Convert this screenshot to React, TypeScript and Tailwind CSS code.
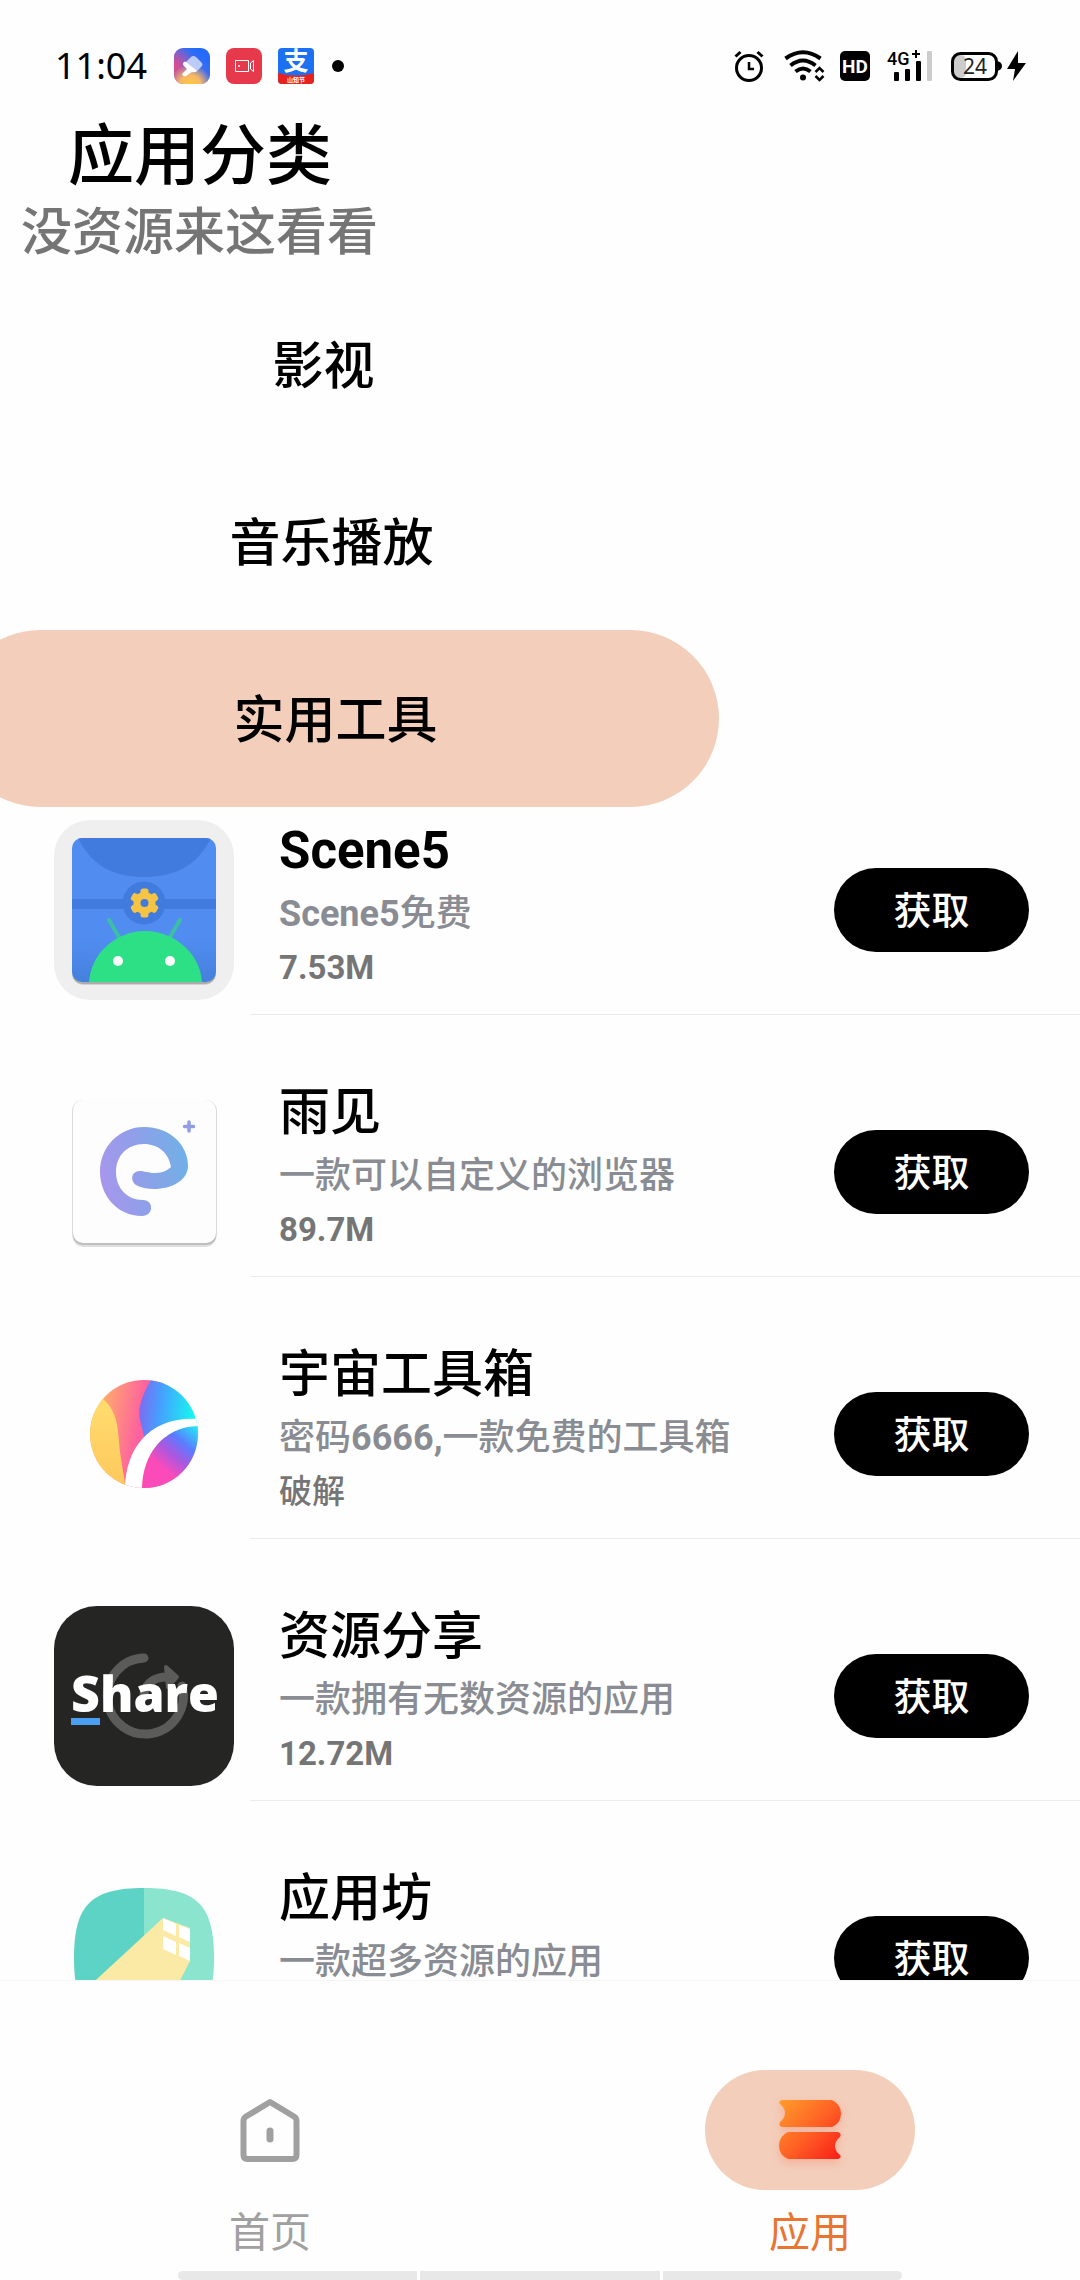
import { useState } from "react";
import type { ReactNode } from "react";

type AppItem = {
  name: string;
  desc: string;
  size: string;
  icon: ReactNode;
};

// Digits and latin words are set bold, chinese text stays medium
function Mixed({ text }: { text: string }) {
  return (
    <>
      {text.split(/([\x20-\x7e]+)/).map((part, i) =>
        i % 2 === 1 ? (
          <span key={i} className="font-bold">
            {part}
          </span>
        ) : (
          part
        ),
      )}
    </>
  );
}

function SceneIcon() {
  return (
    <svg viewBox="0 0 180 180" className="size-[180px]" aria-hidden="true">
      <defs>
        <clipPath id="scene-card">
          <rect x="18" y="18" width="144" height="144" rx="10" />
        </clipPath>
        <linearGradient id="scene-bg" x1="0" y1="0" x2="0" y2="1">
          <stop offset="0.7" stopColor="#518df1" />
          <stop offset="1" stopColor="#4580dd" />
        </linearGradient>
      </defs>
      <rect width="180" height="180" rx="36" fill="#efefef" />
      <rect x="19" y="21" width="142" height="144" rx="10" fill="#000" opacity="0.12" />
      <rect x="18" y="20" width="144" height="144" rx="10" fill="#000" opacity="0.18" />
      <g clipPath="url(#scene-card)">
        <rect x="18" y="18" width="144" height="144" fill="url(#scene-bg)" />
        <path d="M24 18C39 49 64 57 90 57s52-8 67-39z" fill="#417bdd" />
        <rect x="18" y="79" width="144" height="10" fill="#417bdd" />
        <circle cx="90" cy="83" r="21.500" fill="#417bdd" />
        <g fill="#f6c445">
          <circle cx="90.500" cy="83" r="11" />
          <rect x="86.500" y="68.500" width="8" height="29" rx="2.500" />
          <rect x="86.500" y="68.500" width="8" height="29" rx="2.500" transform="rotate(60 90.500 83)" />
          <rect x="86.500" y="68.500" width="8" height="29" rx="2.500" transform="rotate(120 90.500 83)" />
        </g>
        <circle cx="90.500" cy="83" r="4" fill="#417bdd" />
        <path d="M55 100l10 17M126 100l-10 17" stroke="#3ac0a2" strokeWidth="4" strokeLinecap="round" />
        <path d="M35 162c2-29 27-51 56-51s55 22 57 51z" fill="#2ee085" />
        <circle cx="64" cy="141" r="5" fill="#fff" />
        <circle cx="116" cy="141" r="5" fill="#fff" />
      </g>
    </svg>
  );
}

function RainIcon() {
  return (
    <svg viewBox="0 0 180 180" className="size-[180px]" aria-hidden="true">
      <defs>
        <linearGradient id="rain-e" gradientUnits="userSpaceOnUse" x1="46" y1="90" x2="134" y2="76">
          <stop offset="0" stopColor="#a797ec" />
          <stop offset="0.45" stopColor="#8f9fe9" />
          <stop offset="1" stopColor="#70b1e6" />
        </linearGradient>
      </defs>
      <rect x="19" y="21" width="143" height="144" rx="10" fill="#000" opacity="0.12" />
      <rect x="18" y="18" width="145" height="145" rx="11" fill="#000" opacity="0.14" />
      <rect x="19" y="18" width="143" height="143" rx="10" fill="#fdfdfe" />
      <path
        d="M90 45C115 45 134 62 134 84C134 98 118 107 100 107C94 107 88 106 84 104C76 101 76 89 86 89C90 89 94 91 102 91C108 91 114 88 117 85C115 71 104 62 90 62C73 62 62 74 62 90C62 106 73 118 89 118C100 118 100 134 88 134C63 134 46 113 46 90C46 64 66 45 90 45z"
        fill="url(#rain-e)"
      />
      <path d="M135 40v9M130.500 44.500h9" stroke="#919ce6" strokeWidth="3.500" strokeLinecap="round" />
    </svg>
  );
}

function UniverseIcon() {
  return (
    <svg viewBox="0 0 180 180" className="size-[180px]" aria-hidden="true">
      <defs>
        <clipPath id="uni-ball">
          <circle cx="90" cy="90" r="54" />
        </clipPath>
        <linearGradient id="uni-pink" x1="0.1" y1="0.2" x2="0.9" y2="0.4">
          <stop offset="0.1" stopColor="#ffa76e" />
          <stop offset="0.75" stopColor="#fd5fa0" />
        </linearGradient>
        <linearGradient id="uni-blue" x1="0" y1="0.5" x2="1" y2="0.6">
          <stop offset="0" stopColor="#7d6cf0" />
          <stop offset="0.3" stopColor="#489dff" />
          <stop offset="0.85" stopColor="#15f8ee" />
        </linearGradient>
        <linearGradient id="uni-low" x1="0.9" y1="0" x2="0.2" y2="0.9">
          <stop offset="0" stopColor="#25e4f6" />
          <stop offset="0.28" stopColor="#5a7cff" />
          <stop offset="0.5" stopColor="#a858e0" />
          <stop offset="0.75" stopColor="#fb4bb9" />
        </linearGradient>
        <linearGradient id="uni-yellow" x1="0" y1="0" x2="0" y2="1">
          <stop offset="0" stopColor="#ffe072" />
          <stop offset="1" stopColor="#ffc85c" />
        </linearGradient>
      </defs>
      <g clipPath="url(#uni-ball)">
        <rect x="36" y="36" width="75" height="108" fill="url(#uni-pink)" />
        <path d="M36 36L50 56C62 66 64 82 65 98S70 130 72 146H36z" fill="url(#uni-yellow)" />
        <path d="M98 34C90 48 83 62 86 76L91 96L150 84V34z" fill="url(#uni-blue)" />
        <path d="M88 146C88 112 108 82 146 82V146z" fill="url(#uni-low)" />
        <path d="M71 146C71 104 96 71 146 75V82C108 82 88 112 88 146z" fill="#fff" />
      </g>
    </svg>
  );
}

function ShareIcon() {
  return (
    <svg viewBox="0 0 180 180" className="size-[180px]" aria-hidden="true">
      <rect width="180" height="180" rx="43" fill="#252524" />
      <g fill="none" stroke="#5b5b5a" strokeWidth="9" strokeLinecap="round">
        <path d="M90 52A38 38 0 1 0 128 80" />
        <path d="M90 88C92 76 102 71 113 71" />
      </g>
      <path d="M112 61L123 71L114 81z" fill="#5b5b5a" stroke="#5b5b5a" strokeWidth="4" strokeLinejoin="round" />
      <text x="91" y="106" textAnchor="middle" className="fill-white font-['Open_Sans'] text-[50px] font-extrabold">
        Share
      </text>
      <rect x="17" y="112" width="29" height="7" fill="#4b9ff2" />
    </svg>
  );
}

function WorkshopIcon() {
  return (
    <svg viewBox="0 0 180 180" className="size-[180px]" aria-hidden="true">
      <defs>
        <clipPath id="shop-card">
          <path d="M90 20C143 20 160 37 160 90S143 160 90 160S20 143 20 90S37 20 90 20z" />
        </clipPath>
      </defs>
      <g clipPath="url(#shop-card)">
        <rect x="20" y="20" width="70" height="140" fill="#5dd3c6" />
        <rect x="90" y="20" width="70" height="140" fill="#8be4cd" />
        <path d="M109 50L136 60V93L102 160H-10z" fill="#fbeaa5" />
        <path d="M109 50l13 6v12l-13-6zM125 57l11 4v13l-11-5zM109 68l13 6v13l-13-6zM125 75l11 5v13l-11-5z" fill="#fff" />
      </g>
    </svg>
  );
}

function StatusBar() {
  return (
    <div className="flex h-[117px] shrink-0 items-center justify-between pt-[15px] pr-[54px] pl-[55px]">
      <div className="flex items-center">
        <span className="w-[119px] font-['Noto_Sans'] text-[36px] leading-none font-normal">11:04</span>
        <svg viewBox="0 0 36 36" className="size-9" aria-hidden="true">
          <defs>
            <linearGradient id="brush-bg" x1="0.100" y1="1" x2="0.800" y2="0.200">
              <stop offset="0" stopColor="#9a62b8" />
              <stop offset="0.35" stopColor="#5f6ee0" />
              <stop offset="1" stopColor="#246bfb" />
            </linearGradient>
            <radialGradient id="brush-warm" cx="0.45" cy="1.05" r="0.6">
              <stop offset="0" stopColor="#ffc93a" />
              <stop offset="0.5" stopColor="#f7b765" />
              <stop offset="1" stopColor="#f7b765" stopOpacity="0" />
            </radialGradient>
            <radialGradient id="brush-red" cx="0" cy="0.5" r="0.6">
              <stop offset="0" stopColor="#e8488a" />
              <stop offset="1" stopColor="#e8488a" stopOpacity="0" />
            </radialGradient>
          </defs>
          <rect width="36" height="36" rx="9" fill="url(#brush-bg)" />
          <rect width="36" height="36" rx="9" fill="url(#brush-red)" />
          <rect width="36" height="36" rx="9" fill="url(#brush-warm)" />
          <path d="M11 15l6-6q2-2 5 0l6 6q1 2 0 3l-6 6z" fill="#c9d6fa" opacity="0.9" />
          <path d="M10 14q1-1 2 0l11 9q-2 2-5 1l-6 4q-3 1-4-2l5-5-3-3q-2-2 0-4z" fill="#fff" />
        </svg>
        <svg viewBox="0 0 36 36" className="ml-4 size-9" aria-hidden="true">
          <rect width="36" height="36" rx="8" fill="#e63a4c" />
          <path d="M9.500 12.500h13v11h-13zM27.500 12.500l-3 2.500v6l3 2.500z" fill="none" stroke="#fff" />
          <circle cx="13" cy="18" r="1" fill="#fff" />
        </svg>
        <svg viewBox="0 0 36 36" className="ml-4 size-9 overflow-visible" aria-hidden="true">
          <rect width="36" height="36" rx="4" fill="#1c70f2" />
          <path d="M0 25q18 5 36 0v7q0 4-4 4H4q-4 0-4-4z" fill="#e8231f" />
          <text x="18" y="22" textAnchor="middle" className="fill-white font-['Noto_Sans_CJK_SC'] text-[25px] font-bold">
            支
          </text>
          <text x="18" y="34" textAnchor="middle" className="fill-white font-['Noto_Sans_CJK_SC'] text-[6px] font-bold">
            山知节
          </text>
        </svg>
        <span className="ml-[18px] size-3 rounded-full bg-black" />
      </div>

      <div className="flex items-center">
        <svg viewBox="0 0 30 32" className="h-8 w-[30px]" fill="none" stroke="#000" aria-hidden="true">
          <circle cx="15" cy="18" r="12.500" strokeWidth="3" />
          <path d="M15 12v7h5" strokeWidth="2.500" />
          <path d="M1.500 6.500l5-4.500M28.500 6.500l-5-4.500" strokeWidth="3" />
        </svg>
        <svg viewBox="0 0 42 32" className="ml-5 h-8 w-[42px]" fill="none" stroke="#000" aria-hidden="true">
          <path d="M1.500 8.500Q19 -4 36.500 8.500" strokeWidth="4" />
          <path d="M6.500 15.500Q19 5.500 31.500 15.500" strokeWidth="4" />
          <path d="M11.500 21.500Q19 15.500 26.500 21.500" strokeWidth="4" />
          <circle cx="19" cy="27.500" r="3" fill="#000" stroke="none" />
          <path d="M31.500 22l4-4l4 4M31.500 26l4 4l4-4" strokeWidth="2.500" />
        </svg>
        <svg viewBox="0 0 30 30" className="ml-[14px] size-[30px]" aria-hidden="true">
          <rect width="30" height="30" rx="5" fill="#000" />
          <text x="15" y="22" textAnchor="middle" className="fill-white font-[Roboto] text-[19px] font-bold">
            HD
          </text>
        </svg>
        <svg viewBox="0 0 46 32" className="ml-[18px] h-8 w-[46px] overflow-visible" aria-hidden="true">
          <text x="-1" y="15" className="font-[Roboto] text-[18px] font-medium">
            4G
          </text>
          <path d="M24 4h8M28 0v8" stroke="#000" strokeWidth="2" />
          <rect x="6" y="22" width="5" height="9" rx="1" />
          <rect x="17" y="19" width="5" height="12" rx="1" />
          <rect x="28" y="11" width="5" height="20" rx="1" />
          <rect x="39" y="1" width="5" height="30" rx="1" fill="#ccc" />
        </svg>
        <svg viewBox="0 0 76 32" className="ml-4 h-8 w-[76px]" aria-hidden="true">
          <rect x="4" y="5" width="12" height="23" rx="5" fill="#ccc" />
          <rect x="2.500" y="3.500" width="44" height="26" rx="8" fill="none" stroke="#000" strokeWidth="3" />
          <path d="M47 11q5 1 5 5t-5 5z" />
          <text x="25" y="24" textAnchor="middle" className="fill-[#222] font-['Noto_Sans'] text-[21px] font-normal">
            24
          </text>
          <path d="M68 1L57 19h8l-2 12L76 13h-8z" />
        </svg>
      </div>
    </div>
  );
}

const TABS = [
  { label: "影视", shift: "-ml-15" },
  { label: "音乐播放", shift: "-ml-13" },
  { label: "实用工具", shift: "-ml-12" },
];

const APPS: AppItem[] = [
  { name: "Scene5", desc: "Scene5免费", size: "7.53M", icon: <SceneIcon /> },
  { name: "雨见", desc: "一款可以自定义的浏览器", size: "89.7M", icon: <RainIcon /> },
  { name: "宇宙工具箱", desc: "密码6666,一款免费的工具箱", size: "破解", icon: <UniverseIcon /> },
  { name: "资源分享", desc: "一款拥有无数资源的应用", size: "12.72M", icon: <ShareIcon /> },
  { name: "应用坊", desc: "一款超多资源的应用", size: "", icon: <WorkshopIcon /> },
];

function AppRow({ app }: { app: AppItem }) {
  return (
    <li className="flex gap-4 pl-[54px]">
      <div className="shrink-0 pt-[13px] pb-[15px]">{app.icon}</div>
      <div className="flex flex-1 items-center justify-between border-b border-[#ebebeb] pr-[51px] pb-[2px] pl-[29px]">
        <div className="h-[180px]">
          <h2 className="text-[51px] leading-[62px]">
            <Mixed text={app.name} />
          </h2>
          <p className="text-[36px] leading-[64px] text-[#898c92]">
            <Mixed text={app.desc} />
          </p>
          <p className="text-[33px] leading-[44px] text-[#757575]">
            <Mixed text={app.size} />
          </p>
        </div>
        <button type="button" className="h-[84px] w-[195px] shrink-0 rounded-full bg-black pt-1 text-[38px] text-white">
          获取
        </button>
      </div>
    </li>
  );
}

export default function App() {
  const [tab, setTab] = useState("实用工具");

  return (
    <div className="flex h-screen flex-col overflow-hidden bg-[#fefefe] font-[Roboto,'Noto_Sans_CJK_SC',sans-serif] font-medium text-black">
      <StatusBar />

      <header className="shrink-0">
        <h1 className="pl-[68px] text-[66px] leading-[80px]">应用分类</h1>
        <p className="pl-[21px] text-[51px] leading-[72px] text-[#757575]">没资源来这看看</p>
      </header>

      <main className="min-h-0 flex-1 overflow-hidden">
        <div className="flex flex-col items-start pt-[7px]">
          {TABS.map((t) => (
            <button
              key={t.label}
              type="button"
              onClick={() => setTab(t.label)}
              className={`${t.shift} h-[177px] w-[767px] rounded-full pt-[6px] text-[51px] ${
                tab === t.label ? "bg-[#f3ceba]" : ""
              }`}
            >
              {t.label}
            </button>
          ))}
        </div>
        <ul className="flex flex-col gap-[54px]">
          {APPS.map((app) => (
            <AppRow key={app.name} app={app} />
          ))}
        </ul>
      </main>

      <nav className="shrink-0 border-t border-[#f5f5f5] bg-[#fefefe] pt-[89px] font-normal">
        <div className="grid h-[201px] grid-cols-2 justify-items-center">
          <a href="#home" className="flex flex-col items-center text-[#a0a0a0]">
            <span className="flex h-[120px] w-[210px] items-center justify-center">
              <svg viewBox="0 0 60 64" className="h-16 w-[60px]" fill="none" stroke="currentColor" aria-hidden="true">
                <path
                  d="M30 4L54 18.500Q56.500 20 56.500 23V57Q56.500 61 52.500 61H7.500Q3.500 61 3.500 57V23Q3.500 20 6 18.500z"
                  strokeWidth="6"
                  strokeLinejoin="round"
                />
                <path d="M30 33v8" strokeWidth="7" strokeLinecap="round" />
              </svg>
            </span>
            <span className="mt-[5px] text-[41px] leading-[76px]">首页</span>
          </a>
          <a href="#apps" className="flex flex-col items-center text-[#e87532]">
            <span className="flex h-[120px] w-[210px] items-center justify-center rounded-full bg-[#f3ceba]">
              <svg viewBox="0 0 62 60" className="h-[60px] w-[62px] drop-shadow-[0_4px_4px_rgba(255,60,30,0.2)]" aria-hidden="true">
                <defs>
                  <linearGradient id="books" gradientUnits="userSpaceOnUse" x1="2" y1="2" x2="60" y2="58">
                    <stop offset="0" stopColor="#ff9a2b" />
                    <stop offset="0.5" stopColor="#ff6225" />
                    <stop offset="1" stopColor="#f91f18" />
                  </linearGradient>
                </defs>
                <path
                  d="M3 0H53Q62 4 62 13.500T53 27H3Q-1 26 1 22Q6 18 6 13T1 4Q-1 1 3 0zM9 32H59Q63 33 61 37Q56 41 56 46T61 55Q63 58 59 59H9Q0 55 0 45.500T9 32z"
                  fill="url(#books)"
                />
              </svg>
            </span>
            <span className="mt-[5px] text-[41px] leading-[76px]">应用</span>
          </a>
        </div>
        <div className="mx-[178px] flex h-[9px] gap-[3px]">
          <span className="flex-1 rounded-l-full bg-[#e8e8e8]" />
          <span className="flex-1 bg-[#e8e8e8]" />
          <span className="flex-1 rounded-r-full bg-[#e8e8e8]" />
        </div>
      </nav>
    </div>
  );
}
